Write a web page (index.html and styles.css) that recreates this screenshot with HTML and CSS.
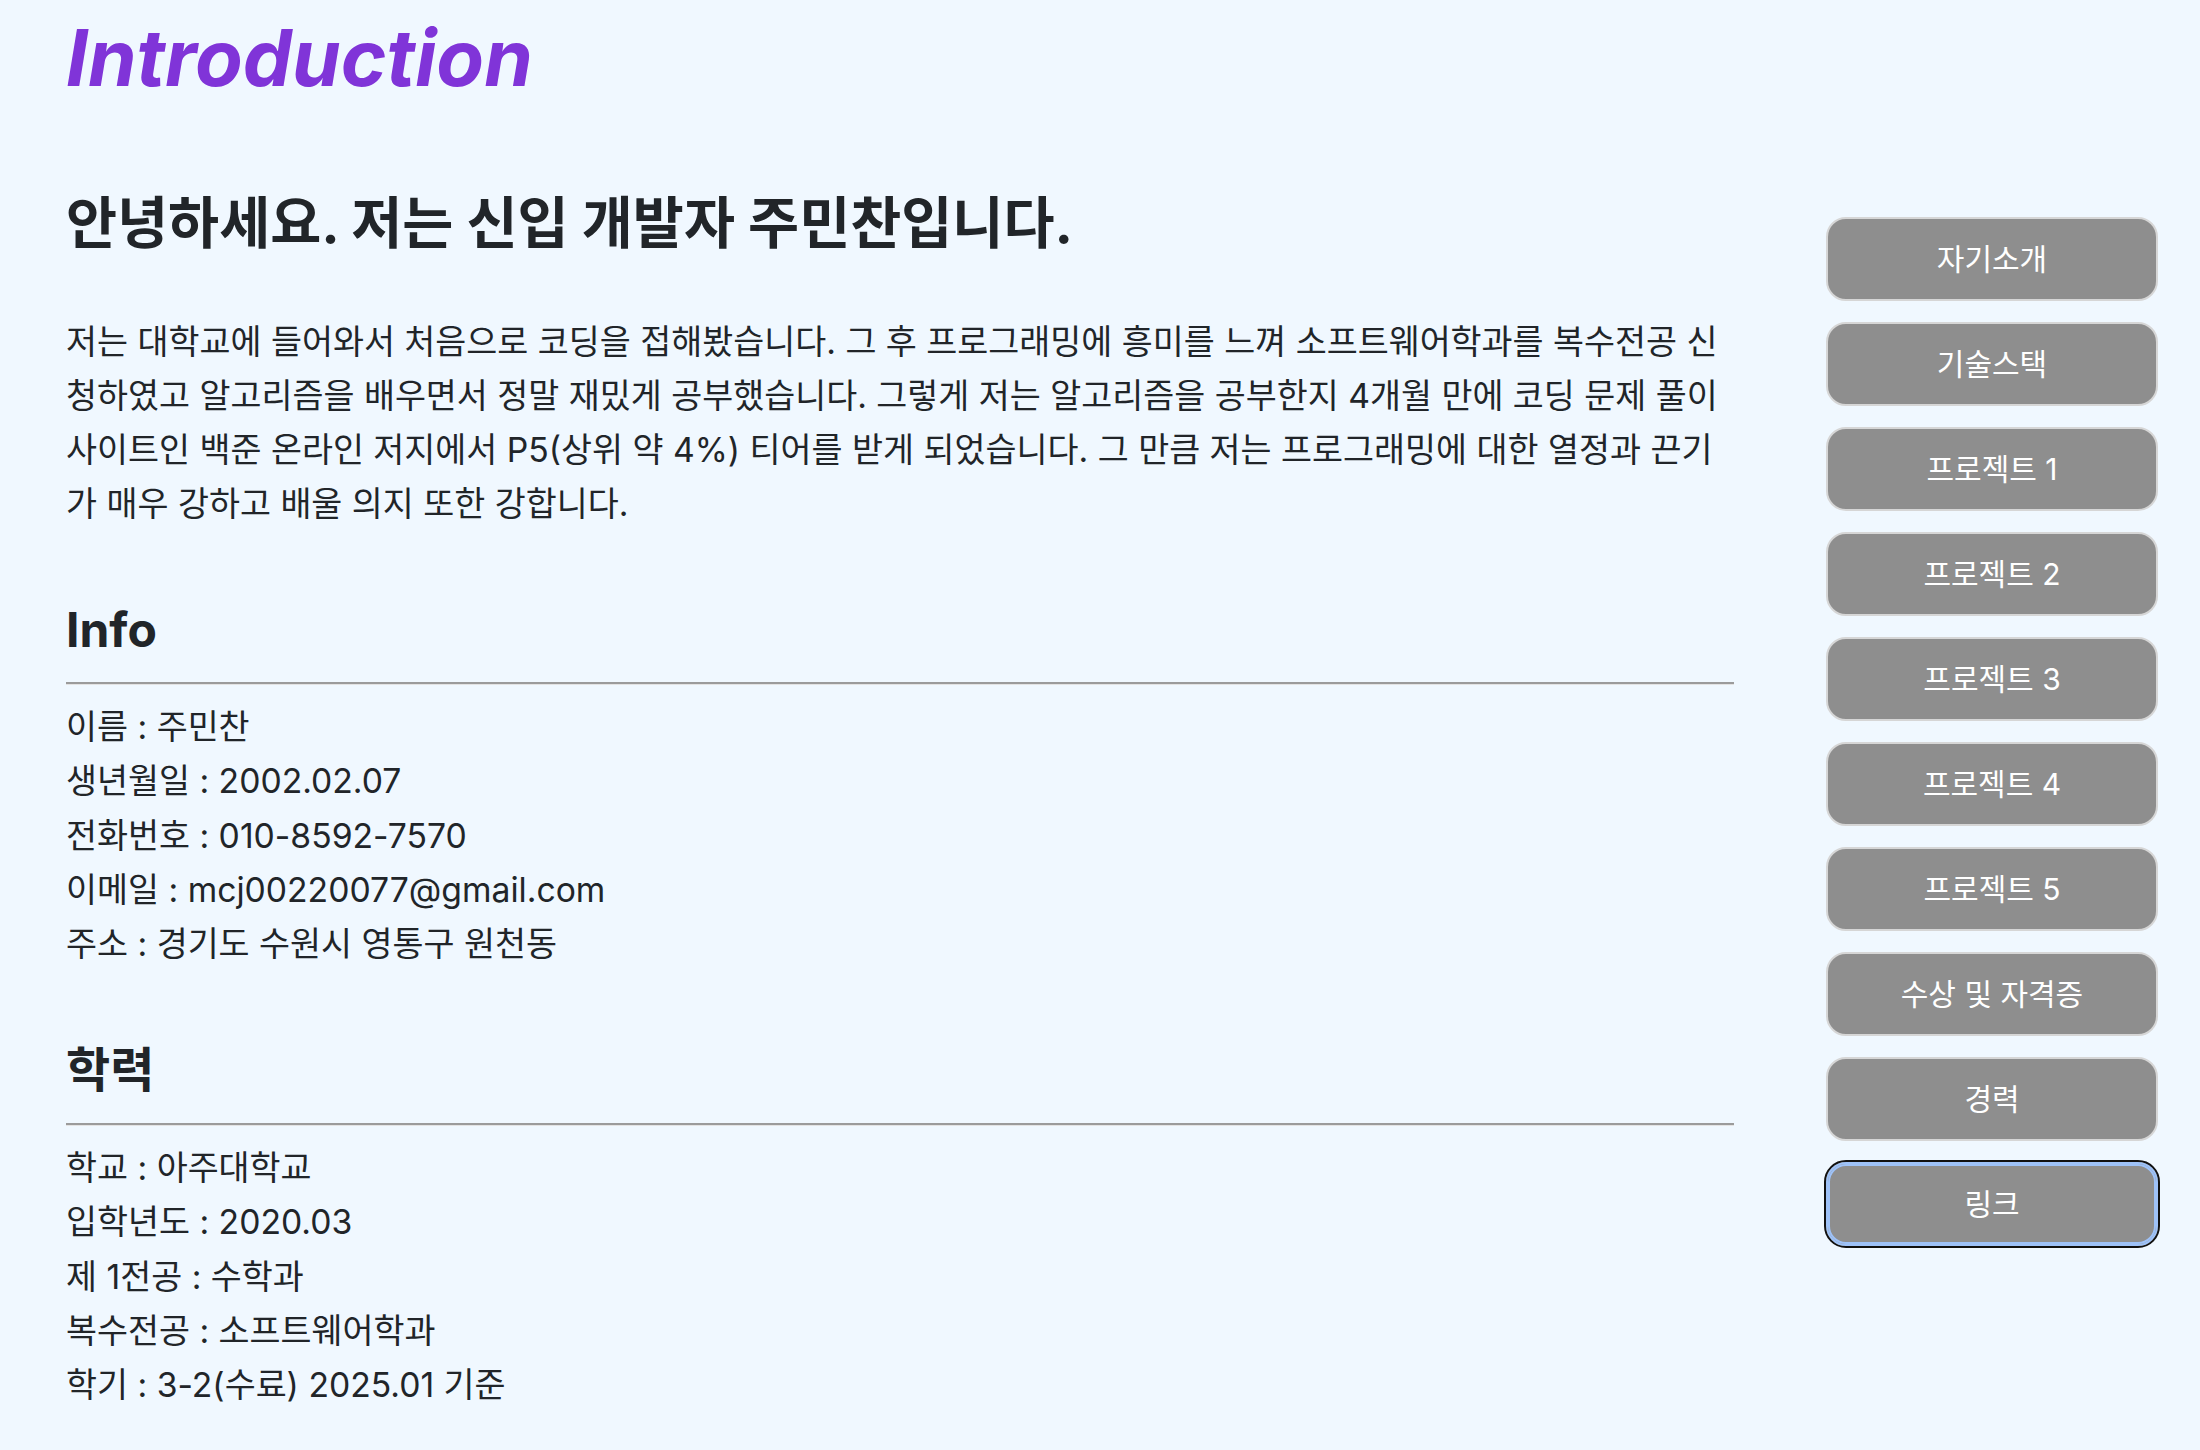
FILE: index.html
```html
<!DOCTYPE html>
<html lang="ko">
<head>
<meta charset="utf-8">
<title>Introduction</title>
<link rel="stylesheet" href="styles.css">
</head>
<body>
<div class="page">
  <main class="content">
    <h1 class="title">Introduction</h1>
    <h2 class="greeting">안녕하세요. 저는 신입 개발자 주민찬입니다.</h2>
    <p class="intro">저는 대학교에 들어와서 처음으로 코딩을 접해봤습니다. 그 후 프로그래밍에 흥미를 느껴 소프트웨어학과를 복수전공 신<br>청하였고 알고리즘을 배우면서 정말 재밌게 공부했습니다. 그렇게 저는 알고리즘을 공부한지 4개월 만에 코딩 문제 풀이<br>사이트인 백준 온라인 저지에서 P5(상위 약 4%) 티어를 받게 되었습니다. 그 만큼 저는 프로그래밍에 대한 열정과 끈기<br>가 매우 강하고 배울 의지 또한 강합니다.</p>

    <section class="block">
      <h3 class="block-title">Info</h3>
      <hr class="divider">
      <ul class="facts">
        <li>이름 : 주민찬</li>
        <li>생년월일 : 2002.02.07</li>
        <li>전화번호 : 010-8592-7570</li>
        <li>이메일 : mcj00220077@gmail.com</li>
        <li>주소 : 경기도 수원시 영통구 원천동</li>
      </ul>
    </section>

    <section class="block">
      <h3 class="block-title">학력</h3>
      <hr class="divider">
      <ul class="facts">
        <li>학교 : 아주대학교</li>
        <li>입학년도 : 2020.03</li>
        <li>제 1전공 : 수학과</li>
        <li>복수전공 : 소프트웨어학과</li>
        <li>학기 : 3-2(수료) 2025.01 기준</li>
      </ul>
    </section>
  </main>

  <nav class="side-nav">
    <button class="nav-btn" type="button">자기소개</button>
    <button class="nav-btn" type="button">기술스택</button>
    <button class="nav-btn" type="button">프로젝트 1</button>
    <button class="nav-btn" type="button">프로젝트 2</button>
    <button class="nav-btn" type="button">프로젝트 3</button>
    <button class="nav-btn" type="button">프로젝트 4</button>
    <button class="nav-btn" type="button">프로젝트 5</button>
    <button class="nav-btn" type="button">수상 및 자격증</button>
    <button class="nav-btn" type="button">경력</button>
    <button class="nav-btn is-focused" type="button">링크</button>
  </nav>
</div>
</body>
</html>
```

FILE: styles.css
```css
html, body {
  margin: 0;
  padding: 0;
}

body {
  background: #f0f8ff;
  color: #212529;
  font-family: Inter, "Noto Sans CJK KR", sans-serif;
}

.page {
  display: flex;
  align-items: flex-start;
  padding: 12px 42px 0 66px;
}

.content {
  flex: none;
  width: 1668px;
}

.title {
  margin: 0;
  font-size: 78px;
  line-height: 92px;
  font-weight: 700;
  font-style: italic;
  color: #8034d8;
}

.greeting {
  margin: 86px 0 0;
  font-size: 55.5px;
  line-height: 66px;
  font-weight: 700;
}

.intro {
  margin: 58.5px 0 0;
  font-size: 33.7px;
  line-height: 54px;
}

.block {
  margin-top: 70px;
}

.block-title {
  margin: 0;
  font-size: 48px;
  line-height: 58px;
  font-weight: 700;
}

.divider {
  height: 0;
  margin: 23.5px 0 15px;
  border: 0;
  border-top: 2px solid #9b9b9b;
  border-bottom: 1px solid #e3e3e3;
}

.facts {
  list-style: none;
  margin: 0;
  padding: 0;
  font-size: 33.7px;
  line-height: 54.3px;
}

.side-nav {
  flex: none;
  width: 332px;
  margin-left: 92px;
  margin-top: 205px;
  display: flex;
  flex-direction: column;
  gap: 21px;
}

.nav-btn {
  height: 84px;
  padding: 0 0 4px;
  border: 2px solid #d6d6d6;
  border-radius: 20px;
  background: #8e8e8e;
  color: #ffffff;
  font-family: Inter, "Noto Sans CJK KR", sans-serif;
  font-size: 30px;
  font-weight: 400;
  cursor: pointer;
}

.nav-btn.is-focused {
  border-color: #9ec2f8;
  box-shadow: inset 0 0 0 2px #9ec2f8;
  outline: 2px solid #111111;
  outline-offset: 0;
}
```
